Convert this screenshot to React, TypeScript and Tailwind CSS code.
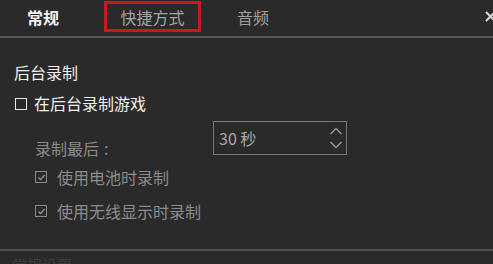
import React from 'react'

const font = { fontFamily: '"Noto Sans CJK SC", "Microsoft YaHei", sans-serif' }

function Box({ checked, light }: { checked?: boolean; light?: boolean }) {
  return (
    <span
      className={`inline-flex items-center justify-center w-[12px] h-[12px] border ${
        light ? 'border-[#e6e6e6]' : 'border-[#8a8a8a]'
      }`}
    >
      {checked && (
        <svg width="9" height="9" viewBox="0 0 9 9" fill="none">
          <path d="M1.5 4.5 L3.6 6.6 L7.6 2" stroke="#9a9a9a" strokeWidth="1.2" />
        </svg>
      )}
    </span>
  )
}

export default function App() {
  return (
    <div className="w-[493px] h-[264px] bg-[#2a2a2a] overflow-hidden text-[16px]" style={font}>
      {/* tabs */}
      <div className="flex items-start h-[36px] pt-[1px]">
        <div className="pl-[27px] pt-[6px] leading-[20px] font-bold text-[#f2f2f2]">常规</div>
        <div className="ml-[45px] w-[97px] h-[31px] border-[3px] border-[#c8191f] flex items-center justify-center text-[#a5a5a5] leading-[20px]">
          快捷方式
        </div>
        <div className="ml-[36px] pt-[6px] leading-[20px] text-[#a0a0a0]">音频</div>
        <div className="ml-auto mr-[-4px] pt-[9px]">
          <svg width="13" height="13" viewBox="0 0 13 13">
            <path d="M2 2 L11 11 M11 2 L2 11" stroke="#d8d8d8" strokeWidth="2" />
          </svg>
        </div>
      </div>
      <div className="h-[2px] bg-[#565656]" />

      {/* body */}
      <div className="pl-[14px] pt-[24px] h-[211px]">
        <div className="leading-[20px] text-[#f0f0f0]">后台录制</div>
        <div className="mt-[11px] flex items-center gap-[7px] leading-[20px] text-[#f0f0f0]">
          <span className="ml-[1px]"><Box light /></span>
          <span>在后台录制游戏</span>
        </div>
        <div className="pl-[21px] mt-[8px] flex items-start">
          <div className="pt-[17px] leading-[20px] text-[#8c8c8c] w-[178px]">
            录制最后<span className="ml-[5px]">:</span>
          </div>
          <div className="w-[134px] h-[34px] border border-[#7a7a7a] flex items-center pl-[5px] pr-[3px]">
            <span className="text-[#a8a8a8] leading-[20px]">30 秒</span>
            <svg className="ml-auto" width="14" height="24" viewBox="0 0 14 24" fill="none">
              <path d="M1.5 8 L7 2.5 L12.5 8" stroke="#9a9a9a" strokeWidth="1.3" />
              <path d="M1.5 16 L7 21.5 L12.5 16" stroke="#9a9a9a" strokeWidth="1.3" />
            </svg>
          </div>
        </div>
        <div className="pl-[21px] mt-[9px] flex items-center gap-[10px] leading-[20px] text-[#8c8c8c]">
          <Box checked />
          <span>使用电池时录制</span>
        </div>
        <div className="pl-[21px] mt-[14px] flex items-center gap-[10px] leading-[20px] text-[#8c8c8c]">
          <Box checked />
          <span>使用无线显示时录制</span>
        </div>
      </div>
      <div className="h-[2px] bg-[#4e4e4e]" />
      <div className="pl-[12px] pt-[4px] leading-[20px] text-[15px] text-[#3c3c3c]">常规设置</div>
    </div>
  )
}
